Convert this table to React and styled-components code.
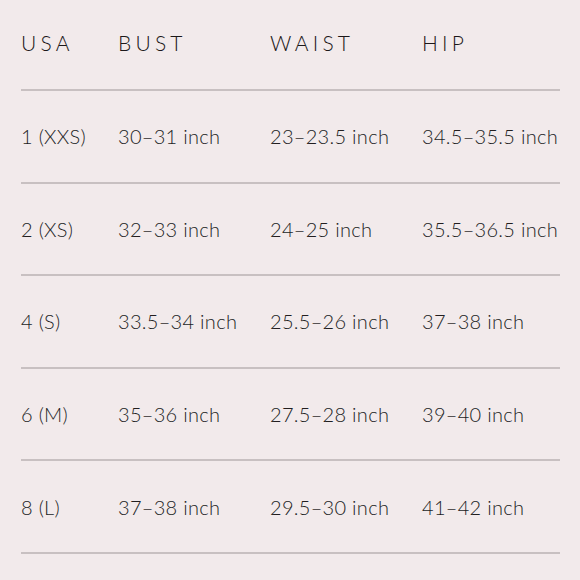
import React from "react";
import styled, { createGlobalStyle } from "styled-components";

const Global = createGlobalStyle`
  html, body { margin: 0; padding: 0; background: #f2eaeb; }
  body { font-family: Lato, "Liberation Sans", sans-serif; }
`;

const Page = styled.div`
  width: 580px;
  height: 580px;
  background: #f2eaeb;
  padding: 0 20px 0 21px;
  box-sizing: border-box;
`;

const Row = styled.div`
  display: grid;
  grid-template-columns: 97px 152px 152px 1fr;
  align-items: center;
  height: ${(p) => (p.$head ? "91px" : "92.6px")};
  box-sizing: border-box;
  border-bottom: 2px solid #c8c0c1;
  padding-bottom: ${(p) => (p.$head ? "4px" : "0")};
`;

const Head = styled.div`
  font-size: 21px;
  letter-spacing: 4.2px;
  color: #1c1819;
  font-weight: 300;
  white-space: nowrap;
`;

const Cell = styled.div`
  font-size: 20px;
  letter-spacing: 0.3px;
  color: #221e1f;
  font-weight: 300;
  white-space: nowrap;
`;

const headers = ["USA", "BUST", "WAIST", "HIP"];
const rows = [
  ["1 (XXS)", "30–31 inch", "23–23.5 inch", "34.5–35.5 inch"],
  ["2 (XS)", "32–33 inch", "24–25 inch", "35.5–36.5 inch"],
  ["4 (S)", "33.5–34 inch", "25.5–26 inch", "37–38 inch"],
  ["6 (M)", "35–36 inch", "27.5–28 inch", "39–40 inch"],
  ["8 (L)", "37–38 inch", "29.5–30 inch", "41–42 inch"],
];

export default function App() {
  return (
    <>
      <Global />
      <Page>
        <Row $head>
          {headers.map((h) => (
            <Head key={h}>{h}</Head>
          ))}
        </Row>
        {rows.map((r) => (
          <Row key={r[0]}>
            {r.map((c, i) => (
              <Cell key={i}>{c}</Cell>
            ))}
          </Row>
        ))}
      </Page>
    </>
  );
}
